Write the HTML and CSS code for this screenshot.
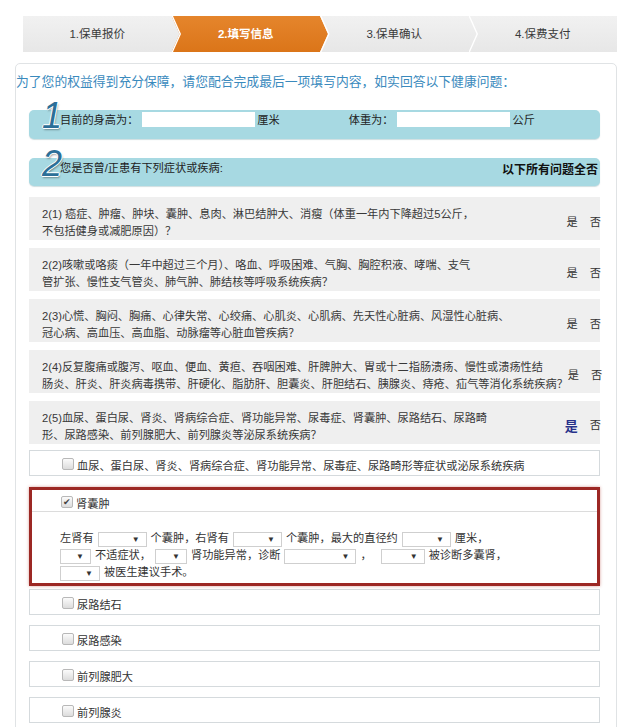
FILE: index.html
```html
<!DOCTYPE html>
<html lang="zh-CN">
<head>
    <meta charset="UTF-8">
    <meta name="viewport" content="width=device-width, initial-scale=1.0">
    <title>填写信息</title>
    <link rel="stylesheet" href="styles.css">
</head>
<body>
    <div class="page">
        <ol class="steps">
            <li class="step">1.保单报价</li>
            <li class="step on">2.填写信息</li>
            <li class="step">3.保单确认</li>
            <li class="step">4.保费支付</li>
        </ol>

        <section class="panel">
            <p class="lead">为了您的权益得到充分保障，请您配合完成最后一项填写内容，如实回答以下健康问题：</p>

            <div class="band">
                <span class="num">1</span>
                <span class="txt">目前的身高为：</span>
                <input class="box-in" type="text">
                <span class="txt">厘米</span>
                <span class="txt weight">体重为：</span>
                <input class="box-in" type="text">
                <span class="txt">公斤</span>
            </div>

            <div class="band band-2">
                <span class="num">2</span>
                <span class="txt">您是否曾/正患有下列症状或疾病:</span>
                <span class="all-no">以下所有问题全否</span>
            </div>

            <div class="q first">
                <p class="q-text">2(1) 癌症、肿瘤、肿块、囊肿、息肉、淋巴结肿大、消瘦（体重一年内下降超过5公斤，<br>不包括健身或减肥原因）？</p>
                <div class="yn"><span>是</span><span>否</span></div>
            </div>
            <div class="q">
                <p class="q-text">2(2)咳嗽或咯痰（一年中超过三个月）、咯血、呼吸困难、气胸、胸腔积液、哮喘、支气<br>管扩张、慢性支气管炎、肺气肿、肺结核等呼吸系统疾病？</p>
                <div class="yn"><span>是</span><span>否</span></div>
            </div>
            <div class="q">
                <p class="q-text">2(3)心慌、胸闷、胸痛、心律失常、心绞痛、心肌炎、心肌病、先天性心脏病、风湿性心脏病、<br>冠心病、高血压、高血脂、动脉瘤等心脏血管疾病？</p>
                <div class="yn"><span>是</span><span>否</span></div>
            </div>
            <div class="q">
                <p class="q-text">2(4)反复腹痛或腹泻、呕血、便血、黄疸、吞咽困难、肝脾肿大、胃或十二指肠溃疡、慢性或溃疡性结<br>肠炎、肝炎、肝炎病毒携带、肝硬化、脂肪肝、胆囊炎、肝胆结石、胰腺炎、痔疮、疝气等消化系统疾病？</p>
                <div class="yn"><span>是</span><span>否</span></div>
            </div>
            <div class="q">
                <p class="q-text">2(5)血尿、蛋白尿、肾炎、肾病综合症、肾功能异常、尿毒症、肾囊肿、尿路结石、尿路畸<br>形、尿路感染、前列腺肥大、前列腺炎等泌尿系统疾病？</p>
                <div class="yn"><span class="sel">是</span><span>否</span></div>
            </div>

            <div class="opt first">
                <span class="check"></span>血尿、蛋白尿、肾炎、肾病综合症、肾功能异常、尿毒症、尿路畸形等症状或泌尿系统疾病
            </div>

            <div class="opt open">
                <div class="opt-head"><span class="check on"></span>肾囊肿</div>
                <div class="opt-form">
                    左肾有<span class="dd w49"></span>个囊肿，右肾有<span class="dd w49"></span>个囊肿，最大的直径约<span class="dd w49"></span>厘米，<br>
                    <span class="dd w31 lead-dd"></span>不适症状，<span class="dd w32"></span>肾功能异常，诊断<span class="dd w72"></span>，<span class="dd w44 far"></span>被诊断多囊肾，<br>
                    <span class="dd w40 lead-dd"></span>被医生建议手术。
                </div>
            </div>

            <div class="opt after-open"><span class="check"></span>尿路结石</div>
            <div class="opt"><span class="check"></span>尿路感染</div>
            <div class="opt"><span class="check"></span>前列腺肥大</div>
            <div class="opt"><span class="check"></span>前列腺炎</div>
        </section>
    </div>
</body>
</html>
```

FILE: styles.css
```css
body {
    margin: 0;
    background: #fff;
    font-family: "Liberation Sans", "Noto Sans CJK SC", sans-serif;
    font-size: 11.2px;
    color: #333;
}

.page {
    width: 602px;
    margin-left: 15px;
    padding-top: 16px;
}

/* step bar */
.steps {
    list-style: none;
    margin: 0 0 11px 8px;
    padding: 0;
    display: flex;
    height: 36px;
    background: linear-gradient(#f1f1f1, #e7e7e7);
    position: relative;
    z-index: 0;
}

.step {
    flex: 1;
    position: relative;
    text-align: center;
    line-height: 36px;
    font-size: 11.5px;
    color: #3a3a3a;
}

/* thin white chevron between steps */
.step:not(:last-child)::after {
    content: "";
    position: absolute;
    top: 0;
    left: 100%;
    width: 10px;
    height: 100%;
    background: #fff;
    clip-path: polygon(0 0, 1.5px 0, 9.5px 50%, 1.5px 100%, 0 100%, 8px 50%);
    z-index: 1;
}

.step.on {
    color: #fff;
    font-weight: bold;
}

.step.on::before {
    content: "";
    position: absolute;
    top: 0;
    bottom: 0;
    left: 0;
    right: -8px;
    background: linear-gradient(#e5852c, #db7519);
    clip-path: polygon(0 0, calc(100% - 8px) 0, 100% 50%, calc(100% - 8px) 100%, 0 100%, 8px 50%);
    z-index: -1;
}

/* main panel */
.panel {
    border: 1px solid #e0e3e5;
    border-radius: 5px;
    padding: 9px 16px 20px 0;
}

.lead {
    margin: 0;
    font-size: 12.8px;
    line-height: 18px;
    color: #3a8abd;
    white-space: nowrap;
}

.band {
    margin: 19px 0 0 13px;
    height: 29px;
    box-sizing: border-box;
    padding: 2px 2px 0 13px;
    display: flex;
    align-items: flex-start;
    background: #a7d9e2;
    border-radius: 5px;
    box-shadow: 0 1px 1px rgba(60, 120, 130, 0.25);
}

.band-2 {
    height: 28px;
}

.num {
    width: 18px;
    margin-top: -14px;
    font: italic 36px/35px "Liberation Sans", sans-serif;
    color: #2c6f98;
    text-align: center;
    text-shadow: -1px 0 #fff, 1px 0 #fff, 0 -1px #fff, 0 1px #fff, 1px 2px 2px rgba(0, 0, 0, 0.35);
}

.txt {
    line-height: 16px;
    color: #222;
}

.box-in {
    width: 113px;
    height: 15px;
    margin: 0 2px 0 4px;
    padding: 0;
    border: 0;
    background: #fff;
}

.weight {
    margin-left: 69px;
}

.all-no {
    margin: 2px 0 0 auto;
    font-size: 12px;
    font-weight: bold;
    line-height: 16px;
    color: #111;
}

/* question rows */
.q {
    margin: 8px 0 0 13px;
    height: 43px;
    box-sizing: border-box;
    padding: 9px 0 0 13px;
    display: flex;
    background: #efefef;
}

.q.first {
    margin-top: 11px;
}

.q-text {
    flex: 1;
    margin: 0;
    line-height: 17px;
    color: #383838;
    white-space: nowrap;
}

.yn {
    display: flex;
    gap: 12px;
    align-self: center;
    margin-top: -4px;
    margin-right: -1px;
    color: #333;
}

.yn .sel {
    font-size: 13px;
    font-weight: bold;
    color: #27318a;
}

/* option list */
.opt {
    margin: 10px 0 0 13px;
    height: 26px;
    box-sizing: border-box;
    padding: 7px 0 0 32px;
    display: flex;
    align-items: flex-start;
    line-height: 16px;
    border: 1px solid #d5dadd;
    background: #fff;
}

.opt.first {
    margin-top: 6px;
}

.opt.after-open {
    margin-top: 3px;
}

.check {
    width: 10px;
    height: 10px;
    margin: 0 3px 0 0;
    border: 1px solid #b8b8b8;
    border-radius: 2px;
    background: linear-gradient(#fbfbfb, #dcdcdc);
    font-size: 9px;
    line-height: 10px;
    text-align: center;
    color: #444;
}

.check.on::after {
    content: "✔";
}

.opt.open {
    display: block;
    height: auto;
    margin-top: 11px;
    padding: 0;
    border: 3px solid #9c2824;
    box-shadow: 0 0 3px rgba(170, 50, 40, 0.45);
}

.opt-head {
    display: flex;
    align-items: flex-start;
    padding: 6px 0 0 29px;
    height: 22px;
    box-sizing: border-box;
    border-bottom: 1px solid #dcdcdc;
}

.opt-form {
    padding: 18px 0 2px 28px;
    line-height: 17px;
    color: #333;
}

.dd {
    display: inline-block;
    height: 15px;
    margin: 0 4px;
    box-sizing: border-box;
    padding-right: 6px;
    border: 1px solid #cfcfcf;
    vertical-align: middle;
    text-align: right;
    font-size: 8px;
    line-height: 13px;
    color: #333;
    background: #fff;
}

.dd::after {
    content: "▼";
}

.dd.lead-dd {
    margin-left: 0;
}

.dd.far {
    margin-left: 9px;
}

.w31 { width: 31px; }
.w32 { width: 32px; }
.w40 { width: 40px; }
.w44 { width: 44px; }
.w49 { width: 49px; }
.w72 { width: 72px; }
```
